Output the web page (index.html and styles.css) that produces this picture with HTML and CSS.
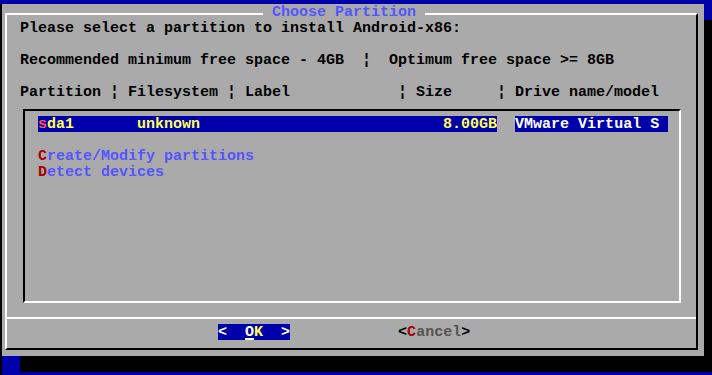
FILE: index.html
```html
<!DOCTYPE html>
<html lang="en">
<head>
    <meta charset="UTF-8">
    <title>Choose Partition</title>
    <link rel="stylesheet" href="styles.css">
</head>
<body>

<div class="screen">
    <div class="dialog">
        <div class="title-row">
            <div class="edge edge-left"></div>
            <div class="title"> Choose Partition </div>
            <div class="edge edge-right"></div>
        </div>

        <div class="frame">
            <div class="body">
                <div class="line">Please select a partition to install Android-x86:</div>
                <div class="line"></div>
                <div class="line">Recommended minimum free space - 4GB  ¦  Optimum free space &gt;= 8GB</div>
                <div class="line"></div>
                <div class="line">Partition ¦ Filesystem ¦ Label            ¦ Size     ¦ Drive name/model</div>

                <!-- partition list -->
                <div class="list">
                    <div class="line"><span class="sel"><span class="hot-sel">s</span>da1       unknown                           8.00GB</span>  <span class="sel sel-model">VMware Virtual S </span></div>
                    <div class="line"></div>
                    <div class="line action"><span class="hot">C</span>reate/Modify partitions</div>
                    <div class="line action"><span class="hot">D</span>etect devices</div>
                </div>
            </div>

            <div class="buttons">
                <div class="line"><span class="btn btn-active">&lt;  <span class="cursor">O</span><span class="hot-sel">K</span>  &gt;</span>            <span class="btn">&lt;<span class="hot">C</span><span class="btn-label">ancel</span>&gt;</span></div>
            </div>
        </div>
    </div>
</div>

</body>
</html>
```

FILE: styles.css
```css
body {
    margin: 0;
    background: #0000aa;
    font-family: "Liberation Mono", "DejaVu Sans Mono", monospace;
    font-size: 15px;
    font-weight: bold;
    color: #000;
}
.screen {
    width: 712px;
    height: 375px;
    overflow: hidden;
    box-sizing: border-box;
    padding: 4px 0 0 2px;
    background: linear-gradient(to right, #000 2px, transparent 2px) 0 4px / 100% 100% no-repeat, #0000aa;
}
.dialog {
    width: 702px;
    height: 352px;
    box-sizing: border-box;
    padding: 0 6px 6px 3px;
    background: #aaaaaa;
    box-shadow: 18px 16px 0 #000;
    display: flex;
    flex-direction: column;
}
.title-row {
    display: flex;
    height: 16px;
}
.edge {
    box-sizing: border-box;
    height: 7px;
    margin-top: 9px;
    border-top: 2px solid #fff;
}
.edge-left {
    width: 258px;
    border-left: 2px solid #fff;
}
.edge-right {
    flex: 1;
    border-right: 2px solid #000;
}
.title {
    width: 162px;
    height: 16px;
    line-height: 18px;
    white-space: pre;
    color: #5555ff;
}
.frame {
    flex: 1;
    display: flex;
    flex-direction: column;
    border-left: 2px solid #fff;
    border-right: 2px solid #000;
    border-bottom: 2px solid #000;
}
.body {
    flex: 1;
    padding-left: 13px;
}
.line {
    height: 16px;
    line-height: 18px;
    white-space: pre;
}
.list {
    box-sizing: border-box;
    height: 194px;
    margin: 9px 15px 0 3px;
    padding: 5px 0 0 13px;
    border-top: 2px solid #000;
    border-left: 2px solid #000;
    border-right: 2px solid #fff;
    border-bottom: 2px solid #fff;
}
.sel {
    display: inline-block;
    height: 16px;
    vertical-align: top;
    background: #0000aa;
    color: #ffff55;
}
.sel-model {
    color: #fff;
}
.hot-sel {
    color: #ff5555;
}
.action {
    color: #5555ff;
}
.hot {
    color: #aa0000;
}
.buttons {
    box-sizing: border-box;
    height: 31px;
    padding: 5px 0 0 211px;
    border-top: 2px solid #fff;
}
.btn {
    display: inline-block;
    height: 16px;
    vertical-align: top;
}
.btn-active {
    background: #0000aa;
    color: #fff;
}
.btn-active .hot-sel {
    color: #ffff55;
}
.btn-label {
    color: #555555;
}
.cursor {
    display: inline-block;
    height: 16px;
    vertical-align: top;
    box-shadow: inset 0 -2px 0 #fff;
}
```
